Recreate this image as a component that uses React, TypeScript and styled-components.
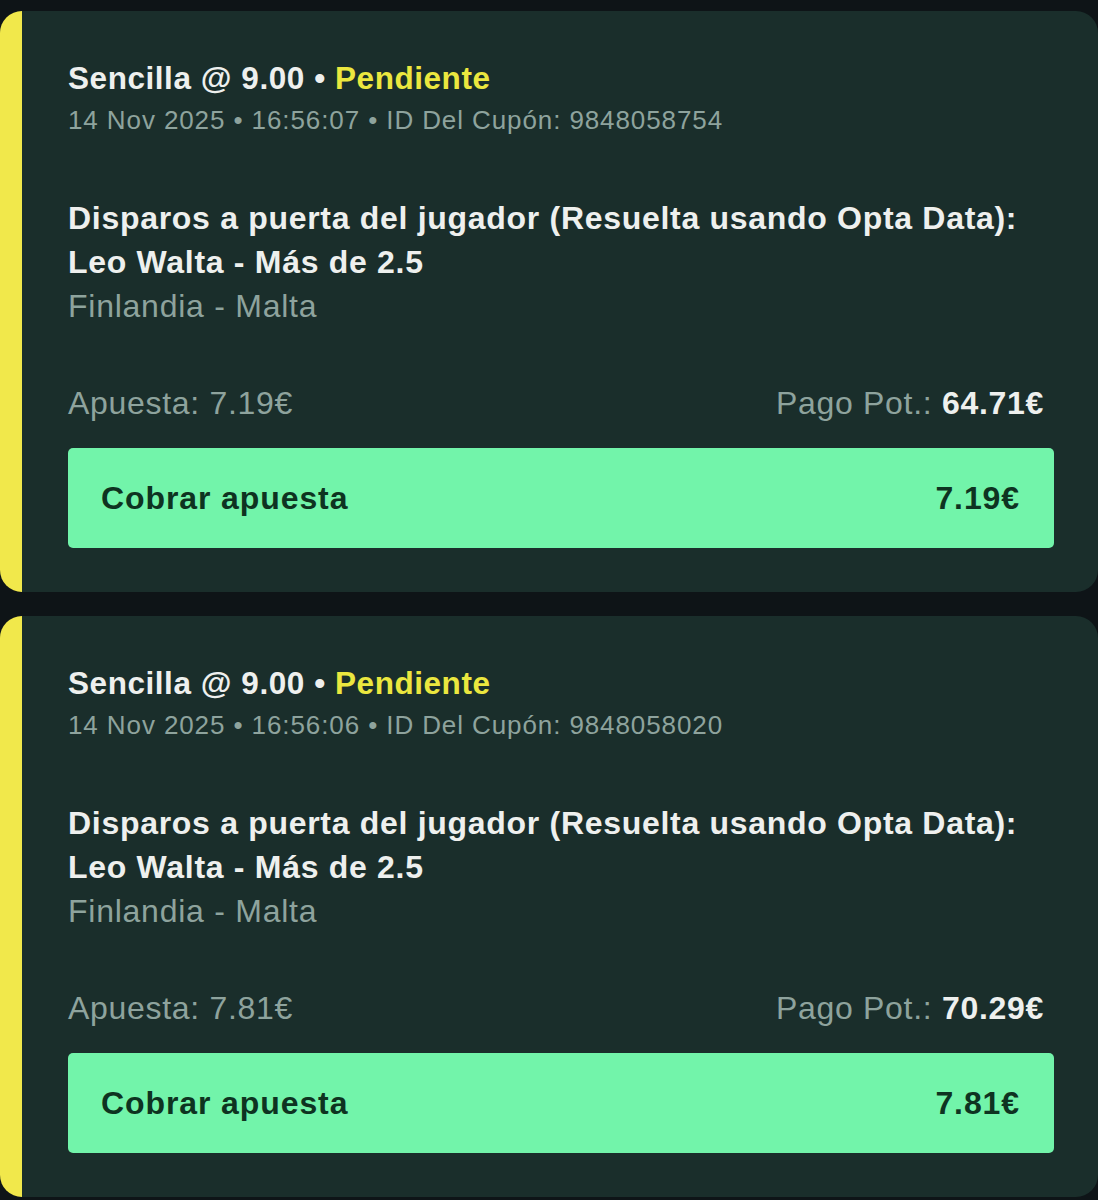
import React from "react";
import styled, { createGlobalStyle } from "styled-components";

const Global = createGlobalStyle`
  html, body { margin: 0; padding: 0; background: #0e1417; }
  body { font-family: "Liberation Sans", Arial, Helvetica, sans-serif; -webkit-font-smoothing: antialiased; }
`;

const Page = styled.div`
  display: flex;
  flex-direction: column;
  gap: 24px;
  padding-top: 11px;
  padding-bottom: 40px;
`;

const Card = styled.div`
  background: #1a2e2b;
  border-left: 22px solid #f1e84b;
  border-radius: 22px;
  padding: 46px 44px 44px 46px;
`;

const Title = styled.div`
  font-size: 31.5px;
  line-height: 42px;
  font-weight: 700;
  color: #eef0ee;
  letter-spacing: 0.55px;
`;

const Status = styled.span`
  color: #ebe73f;
`;

const Meta = styled.div`
  font-size: 26px;
  line-height: 42px;
  color: #8ea39d;
  letter-spacing: 0.9px;
`;

const Market = styled.div`
  margin-top: 55px;
  font-size: 32px;
  line-height: 44px;
  font-weight: 700;
  color: #eef0ee;
  letter-spacing: 0.7px;
`;

const Event = styled.div`
  font-size: 32px;
  line-height: 44px;
  color: #8ea39d;
  letter-spacing: 0.75px;
`;

const StakeRow = styled.div`
  margin-top: 53px;
  display: flex;
  justify-content: space-between;
  padding-right: 10px;
  font-size: 32px;
  line-height: 44px;
  color: #8ea39d;
  letter-spacing: 0.7px;
`;

const Strong = styled.span`
  font-weight: 700;
  color: #eef0ee;
`;

const CashOut = styled.div`
  margin-top: 23px;
  height: 100px;
  box-sizing: border-box;
  display: flex;
  align-items: center;
  justify-content: space-between;
  padding: 0 34px 0 33px;
  background: #72f4aa;
  border-radius: 5px;
  font-size: 32px;
  font-weight: 700;
  color: #0e3321;
  letter-spacing: 0.9px;
`;

type Bet = { time: string; id: string; stake: string; payout: string };

const bets: Bet[] = [
  { time: "16:56:07", id: "9848058754", stake: "7.19€", payout: "64.71€" },
  { time: "16:56:06", id: "9848058020", stake: "7.81€", payout: "70.29€" },
];

const BetCard: React.FC<{ bet: Bet }> = ({ bet }) => (
  <Card>
    <Title>
      Sencilla @ 9.00 • <Status>Pendiente</Status>
    </Title>
    <Meta>
      14 Nov 2025 • {bet.time} • ID Del Cupón: {bet.id}
    </Meta>
    <Market>
      Disparos a puerta del jugador (Resuelta usando Opta Data):
      <br />
      Leo Walta - Más de 2.5
    </Market>
    <Event>Finlandia - Malta</Event>
    <StakeRow>
      <span>Apuesta: {bet.stake}</span>
      <span>
        Pago Pot.: <Strong>{bet.payout}</Strong>
      </span>
    </StakeRow>
    <CashOut>
      <span>Cobrar apuesta</span>
      <span>{bet.stake}</span>
    </CashOut>
  </Card>
);

export default function App() {
  return (
    <>
      <Global />
      <Page>
        {bets.map((b) => (
          <BetCard key={b.id} bet={b} />
        ))}
      </Page>
    </>
  );
}
